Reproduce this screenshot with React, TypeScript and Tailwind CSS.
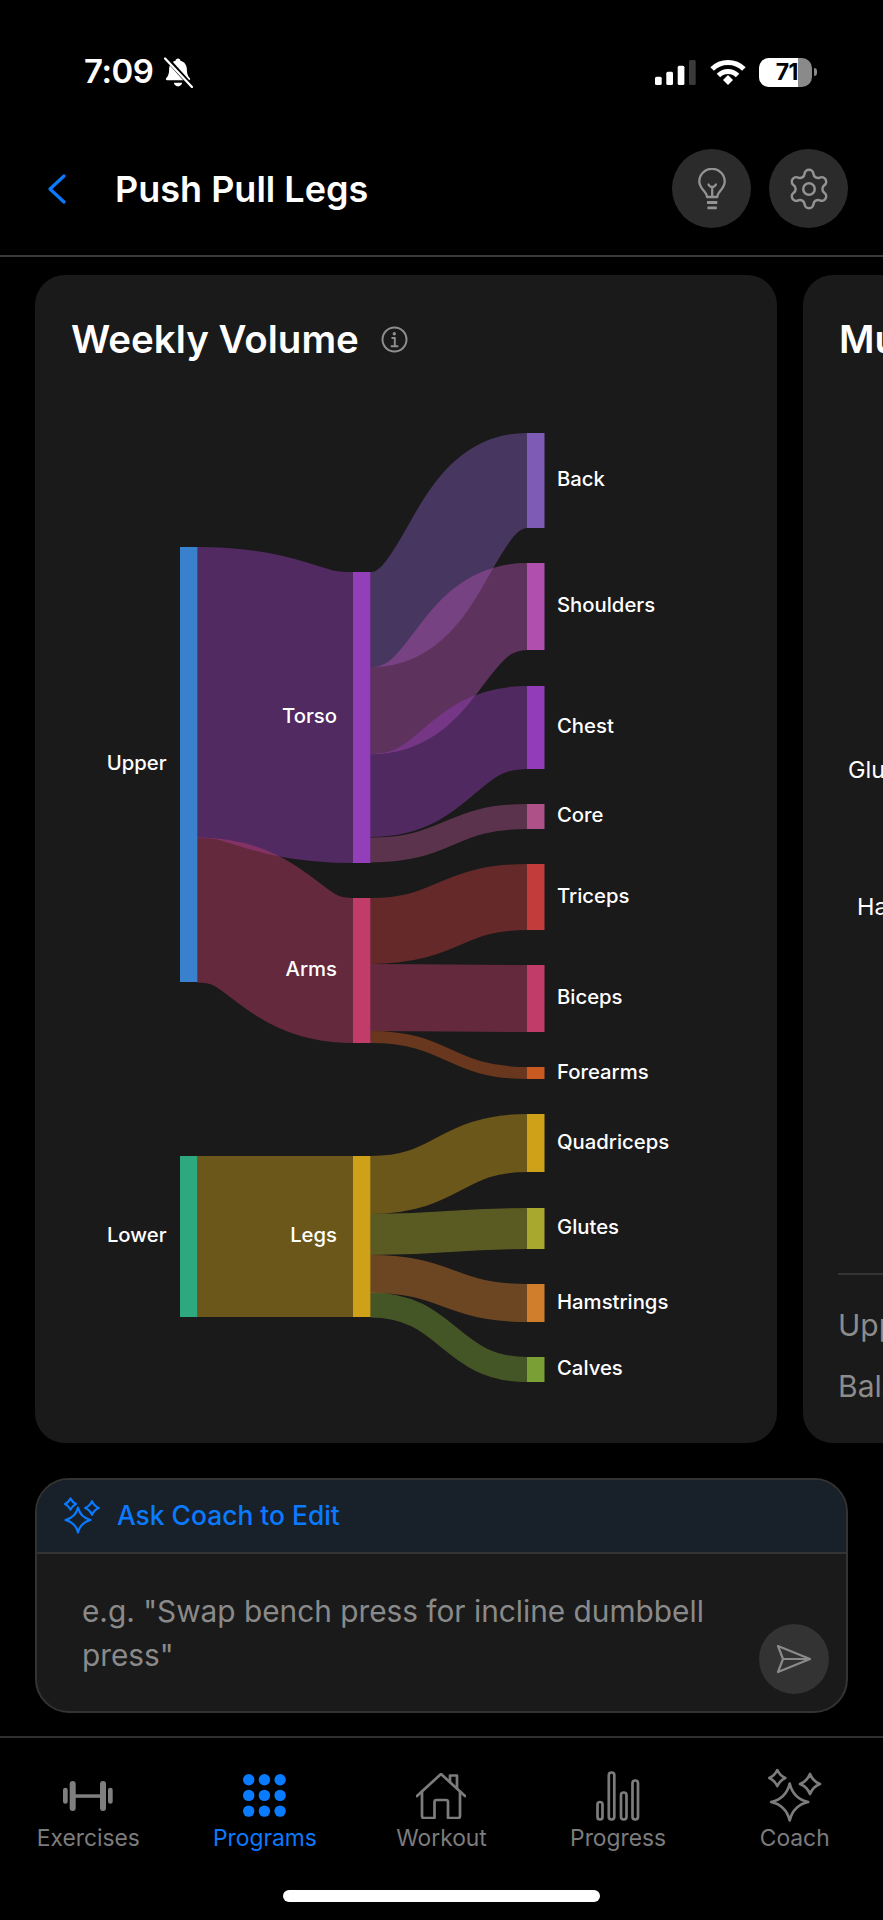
import { Settings } from "lucide-react";

const inter = "font-['Inter','Noto_Sans',sans-serif]";

type Node = { name: string; col: 0 | 1 | 2; y0: number; y1: number; color: string };

const colX = [180, 353, 527];
const NODE_W = 17.5;

const nodes: Node[] = [
    { name: "Upper", col: 0, y0: 547, y1: 982, color: "#3a81cd" },
    { name: "Lower", col: 0, y0: 1156, y1: 1317, color: "#2ea87f" },
    { name: "Torso", col: 1, y0: 572, y1: 863, color: "#933fb9" },
    { name: "Arms", col: 1, y0: 898, y1: 1043, color: "#c23c6a" },
    { name: "Legs", col: 1, y0: 1156, y1: 1317, color: "#cfa118" },
    { name: "Back", col: 2, y0: 433, y1: 528, color: "#7e5cb5" },
    { name: "Shoulders", col: 2, y0: 563, y1: 650, color: "#b04fae" },
    { name: "Chest", col: 2, y0: 686, y1: 769, color: "#933cb9" },
    { name: "Core", col: 2, y0: 804, y1: 829, color: "#ae5189" },
    { name: "Triceps", col: 2, y0: 864, y1: 930, color: "#c23c3c" },
    { name: "Biceps", col: 2, y0: 965, y1: 1032, color: "#c23c6a" },
    { name: "Forearms", col: 2, y0: 1067, y1: 1079, color: "#c85a22" },
    { name: "Quadriceps", col: 2, y0: 1114, y1: 1172, color: "#cfa118" },
    { name: "Glutes", col: 2, y0: 1208, y1: 1249, color: "#a8a82e" },
    { name: "Hamstrings", col: 2, y0: 1284, y1: 1322, color: "#d07d2c" },
    { name: "Calves", col: 2, y0: 1357, y1: 1382, color: "#7a9f35" },
];

// col, source y0, source y1, target y0, target y1, colour
const links: [number, number, number, number, number, string][] = [
    [0, 547, 838, 572, 863, "#933fb9"],
    [0, 838, 982, 898, 1043, "#c23c6a"],
    [0, 1156, 1317, 1156, 1317, "#cfa118"],
    [1, 572, 667.5, 433, 528, "#7e5cb5"],
    [1, 667.5, 754, 563, 650, "#b04fae"],
    [1, 754, 837, 686, 769, "#933cb9"],
    [1, 837, 863, 804, 829, "#ae5189"],
    [1, 898, 964, 864, 930, "#c23c3c"],
    [1, 964, 1031, 965, 1032, "#c23c6a"],
    [1, 1031, 1043, 1067, 1079, "#c85a22"],
    [1, 1156, 1214, 1114, 1172, "#cfa118"],
    [1, 1214, 1255, 1208, 1249, "#a8a82e"],
    [1, 1255, 1293, 1284, 1322, "#d07d2c"],
    [1, 1293, 1317, 1357, 1382, "#7a9f35"],
];

const Sankey = () => (
    <svg viewBox="35 400 742 1000" className="block w-[742px] h-[1000px]">
        {links.map(([col, s0, s1, t0, t1, color], i) => {
            const x0 = colX[col] + NODE_W;
            const x1 = colX[col + 1];
            const mid = (x0 + x1) / 2;
            const a = (s0 + s1) / 2;
            const b = (t0 + t1) / 2;
            return (
                <path
                    key={i}
                    d={`M${x0} ${a}C${mid} ${a} ${mid} ${b} ${x1} ${b}`}
                    fill="none"
                    stroke={color}
                    strokeOpacity={0.45}
                    strokeWidth={t1 - t0}
                />
            );
        })}
        {nodes.map((n) => (
            <rect key={n.name} x={colX[n.col]} y={n.y0} width={NODE_W} height={n.y1 - n.y0} fill={n.color} />
        ))}
        {nodes.map((n) => {
            const right = n.col === 2;
            const x = right ? 557 : n.col === 0 ? 166.5 : 337;
            return (
                <text
                    key={n.name}
                    x={x}
                    y={(n.y0 + n.y1) / 2 - 1.5}
                    dy="0.35em"
                    textAnchor={right ? "start" : "end"}
                    fill="#ffffff"
                    fontSize={20.3}
                    fontWeight={450}
                    fontFamily="Inter, sans-serif"
                >
                    {n.name}
                </text>
            );
        })}
    </svg>
);

const star = (cx: number, cy: number, a: number, k: number) =>
    `M${cx} ${cy - a}Q${cx + k} ${cy - k} ${cx + a} ${cy}Q${cx + k} ${cy + k} ${cx} ${cy + a}Q${cx - k} ${cy + k} ${cx - a} ${cy}Q${cx - k} ${cy - k} ${cx} ${cy - a}Z`;

const BellSlash = () => (
    <svg width="30" height="31" viewBox="0 0 28 30" fill="white">
        <path d="M14 1.500c1.300 0 2.200.9 2.400 2.200 4 1 6.200 4.300 6.200 8.600 0 4 1 6.300 2.900 8.300.6.7.2 2-1 2H3.500c-1.200 0-1.600-1.300-1-2 1.900-2 2.900-4.300 2.900-8.300 0-4.300 2.200-7.600 6.200-8.600.2-1.300 1.100-2.200 2.400-2.200z" />
        <path d="M10 25h8c-.3 2-1.900 3.500-4 3.500S10.300 27 10 25z" />
        <path d="M3 1.500L27 28" stroke="black" strokeWidth="4.500" />
        <path d="M1.500 1.500L27.500 29" stroke="white" strokeWidth="2.200" strokeLinecap="round" />
    </svg>
);

const SignalBars = () => (
    <svg width="42" height="25" viewBox="0 0 42 25" fill="white">
        <rect x="0" y="16.700" width="6.700" height="8.300" rx="1.500" />
        <rect x="11.300" y="11.700" width="6.700" height="13.300" rx="1.500" />
        <rect x="22.700" y="5.700" width="6.700" height="19.300" rx="1.500" />
        <rect x="34" y="0" width="6.700" height="25" rx="1.500" fill="#3a3a3a" />
    </svg>
);

const Wifi = () => (
    <svg width="36" height="26" viewBox="0 0 36 26" fill="none" stroke="white" strokeWidth="5">
        <path d="M2.100 10.100A22.500 22.500 0 0 1 33.900 10.100" />
        <path d="M8.450 16.450A13.500 13.500 0 0 1 27.550 16.450" />
        <path d="M13 21l5-5 5 5-5 5z" fill="white" stroke="none" />
    </svg>
);

const Battery = () => (
    <div className="flex items-center gap-[2px]">
        <div className="w-[53px] h-[29px] rounded-[10px] overflow-hidden bg-[#8a8a8a]">
            <div className={`w-[39px] h-full bg-white flex items-center justify-end text-black text-[23px] font-bold tracking-[-0.5px] ${inter}`}>
                71
            </div>
        </div>
        <div className="w-[3px] h-[8px] bg-[#8a8a8a] rounded-r-full" />
    </div>
);

const Lightbulb = () => (
    <svg width="28" height="42" viewBox="0 0 28 42" fill="none" stroke="#939393" strokeWidth="2.300" strokeLinecap="round" strokeLinejoin="round">
        <path d="M9 29c0-5.500-7.700-8-7.700-15.500a12.700 12.700 0 0 1 25.400 0C26.700 21 19.300 23.500 19.300 29z" />
        <path d="M14.200 29V19M10.500 16.500c1 2 2.500 2.500 3.700 2.500s2.700-.5 3.700-2.500" />
        <path d="M9 34.500h10.300M9.500 39.800h9.300" strokeWidth="2.800" strokeLinecap="butt" />
    </svg>
);

const InfoIcon = () => (
    <svg width="27" height="27" viewBox="0 0 27 27" fill="none" stroke="#8e8e8e" strokeWidth="2">
        <circle cx="13.500" cy="13.500" r="12" />
        <circle cx="13.300" cy="7.800" r="1.700" fill="#8e8e8e" stroke="none" />
        <path d="M10.500 12h3.300v8M9.800 20.200h7.500" strokeWidth="1.900" />
    </svg>
);

const CoachSparkle = () => (
    <svg width="36" height="37" viewBox="0 0 36 37" fill="none" stroke="#0a7aff" strokeWidth="2.200" strokeLinejoin="round">
        <path d={star(14, 23, 12.500, 2.500)} />
        <path d={star(6.500, 7, 5.500, 1.800)} />
        <path d={star(28, 11, 6.800, 2)} />
    </svg>
);

const Dumbbell = () => (
    <svg width="50" height="30" viewBox="0 0 50 30" fill="#7f7f7f">
        <rect x="0" y="6.700" width="4.700" height="16" rx="2.300" />
        <rect x="6.700" y="0" width="6" height="30" rx="3" />
        <rect x="12" y="13.300" width="26" height="3.500" />
        <rect x="37" y="0" width="6" height="30" rx="3" />
        <rect x="45" y="6.700" width="4.700" height="16" rx="2.300" />
    </svg>
);

const DotGrid = () => (
    <svg width="44" height="43" viewBox="0 0 44 43" fill="#0a7aff">
        {[5.700, 21.400, 37.100].map((cy) =>
            [5.700, 21.400, 37.100].map((cx) => <circle key={`${cx}-${cy}`} cx={cx} cy={cy} r="5.700" />)
        )}
    </svg>
);

const HomeIcon = () => (
    <svg width="50" height="46" viewBox="0 0 50 46" fill="none" stroke="#7c7c7c" strokeWidth="2.700" strokeLinecap="round" strokeLinejoin="round">
        <path d="M1 23L25 1l24 22" />
        <path d="M6 18.500V43a2 2 0 0 0 2 2h10.500V29a2 2 0 0 1 2-2h9.500a2 2 0 0 1 2 2v16H42a2 2 0 0 0 2-2V18.500" />
        <path d="M34 9V2.500h7v13" />
    </svg>
);

const BarsIcon = () => (
    <svg width="44" height="50" viewBox="0 0 44 50" fill="none" stroke="#7c7c7c" strokeWidth="2.700">
        <rect x="1.500" y="31" width="5" height="17.500" rx="2.500" />
        <rect x="12.800" y="1.500" width="5.500" height="47" rx="2.700" />
        <rect x="25" y="21.500" width="5.500" height="27" rx="2.700" />
        <rect x="36.500" y="9.500" width="5.500" height="39" rx="2.700" />
    </svg>
);

const SparkleTab = () => (
    <svg width="54" height="53" viewBox="0 0 54 53" fill="none" stroke="#7c7c7c" strokeWidth="2.700" strokeLinejoin="round">
        <path d={star(21.700, 33, 18.500, 3.500)} />
        <path d={star(9.300, 9, 8, 2.500)} />
        <path d={star(42, 15, 10, 2.800)} />
    </svg>
);

const SendIcon = () => (
    <svg width="36" height="30" viewBox="0 0 36 30" fill="none" stroke="#8a8a8a" strokeWidth="2.200" strokeLinejoin="round">
        <path d="M2 2l32 13L2 28l5-13zM7 15h27" />
    </svg>
);

const tabs = [
    { label: "Exercises", icon: <Dumbbell /> },
    { label: "Programs", icon: <DotGrid />, active: true },
    { label: "Workout", icon: <HomeIcon /> },
    { label: "Progress", icon: <BarsIcon /> },
    { label: "Coach", icon: <SparkleTab /> },
];

export default function App() {
    return (
        <div className={`w-[883px] h-[1920px] overflow-hidden bg-black text-white flex flex-col ${inter}`}>
            {/* status bar */}
            <div className="h-[120px] shrink-0 pt-[24px] pl-[84px] pr-[66px] flex items-center justify-between">
                <div className="flex items-center gap-[10px]">
                    <span className="text-[33px] font-semibold tracking-[-0.5px]">7:09</span>
                    <BellSlash />
                </div>
                <div className="flex items-center gap-[13px]">
                    <SignalBars />
                    <Wifi />
                    <Battery />
                </div>
            </div>

            {/* header */}
            <div className="h-[137px] shrink-0 pt-[2px] pl-[48px] pr-[35px] flex items-center border-b-2 border-[#3a3a3a]">
                <svg width="18" height="30" viewBox="0 0 18 30" fill="none" stroke="#0a7aff" strokeWidth="3.200" strokeLinecap="round" strokeLinejoin="round">
                    <path d="M16 2L2 15l14 13" />
                </svg>
                <h1 className="ml-[49px] text-[36px] font-semibold">Push Pull Legs</h1>
                <div className="ml-auto flex items-center gap-[18px]">
                    <button className="w-[79px] h-[79px] rounded-full bg-[#2b2b2b] flex items-center justify-center">
                        <Lightbulb />
                    </button>
                    <button className="w-[79px] h-[79px] rounded-full bg-[#2b2b2b] flex items-center justify-center">
                        <Settings size={46} strokeWidth={1.300} color="#939393" />
                    </button>
                </div>
            </div>

            {/* carousel */}
            <div className="pt-[18px] pl-[35px] flex gap-[26px] overflow-hidden shrink-0">
                <section className="w-[742px] h-[1168px] shrink-0 rounded-[30px] bg-[#1a1a1a] pt-[42px]">
                    <div className="pl-[36px] h-[44px] flex items-center gap-[22px]">
                        <h2 className="text-[38.500px] leading-[44px] font-semibold">Weekly Volume</h2>
                        <InfoIcon />
                    </div>
                    <div className="mt-[39px]">
                        <Sankey />
                    </div>
                </section>

                <section className="w-[742px] h-[1168px] shrink-0 rounded-[30px] bg-[#1a1a1a] pt-[42px] flex flex-col">
                    <h2 className="pl-[36px] text-[38.500px] leading-[44px] font-semibold">Muscle Balance</h2>
                    <div className="mt-[395px] pl-[45px] text-[23.500px] leading-[28px]">Glutes</div>
                    <div className="mt-[109px] pl-[54px] text-[23.500px] leading-[28px]">Hamstrings</div>
                    <div className="mt-[352px] mx-[35px] border-t-2 border-[#333333] pt-[30px] text-[30px] leading-[61px] text-[#8c8c8c]">
                        <div className="-mt-[10px]">Upper / Lower</div>
                        <div>Balance</div>
                    </div>
                </section>
            </div>

            {/* coach input */}
            <div className="mt-[35px] mx-[35px] h-[235px] w-[813px] shrink-0 rounded-[34px] border-2 border-[#333333] bg-[#1a1a1a] overflow-hidden flex flex-col">
                <div className="h-[74px] shrink-0 bg-[#18202a] border-b-2 border-[#333333] pl-[27px] pb-[1px] flex items-center gap-[17px]">
                    <CoachSparkle />
                    <span className="text-[26.400px] font-medium text-[#0a7aff]">Ask Coach to Edit</span>
                </div>
                <div className="flex-1 flex justify-between pr-[17px] pb-[17px]">
                    <p className="w-[705px] pl-[45px] pt-[35px] text-[29.800px] leading-[44px] text-[#8a8a8a]">
                        e.g. "Swap bench press for incline dumbbell press"
                    </p>
                    <button className="self-end w-[70px] h-[70px] rounded-full bg-[#333333] flex items-center justify-center">
                        <SendIcon />
                    </button>
                </div>
            </div>

            {/* tab bar */}
            <div className="mt-[23px] border-t-2 border-[#2e2e2e] pt-[29px] grid grid-cols-5 shrink-0">
                {tabs.map((t) => (
                    <div key={t.label} className="flex flex-col items-center">
                        <div className="h-[57px] flex items-center justify-center">{t.icon}</div>
                        <span className={`text-[22.800px] leading-[28px] ${t.active ? "text-[#0a7aff]" : "text-[#7c7c7c]"}`}>
                            {t.label}
                        </span>
                    </div>
                ))}
            </div>

            {/* home indicator */}
            <div className="mt-[38px] mx-auto w-[317px] h-[12px] rounded-full bg-white shrink-0" />
        </div>
    );
}
